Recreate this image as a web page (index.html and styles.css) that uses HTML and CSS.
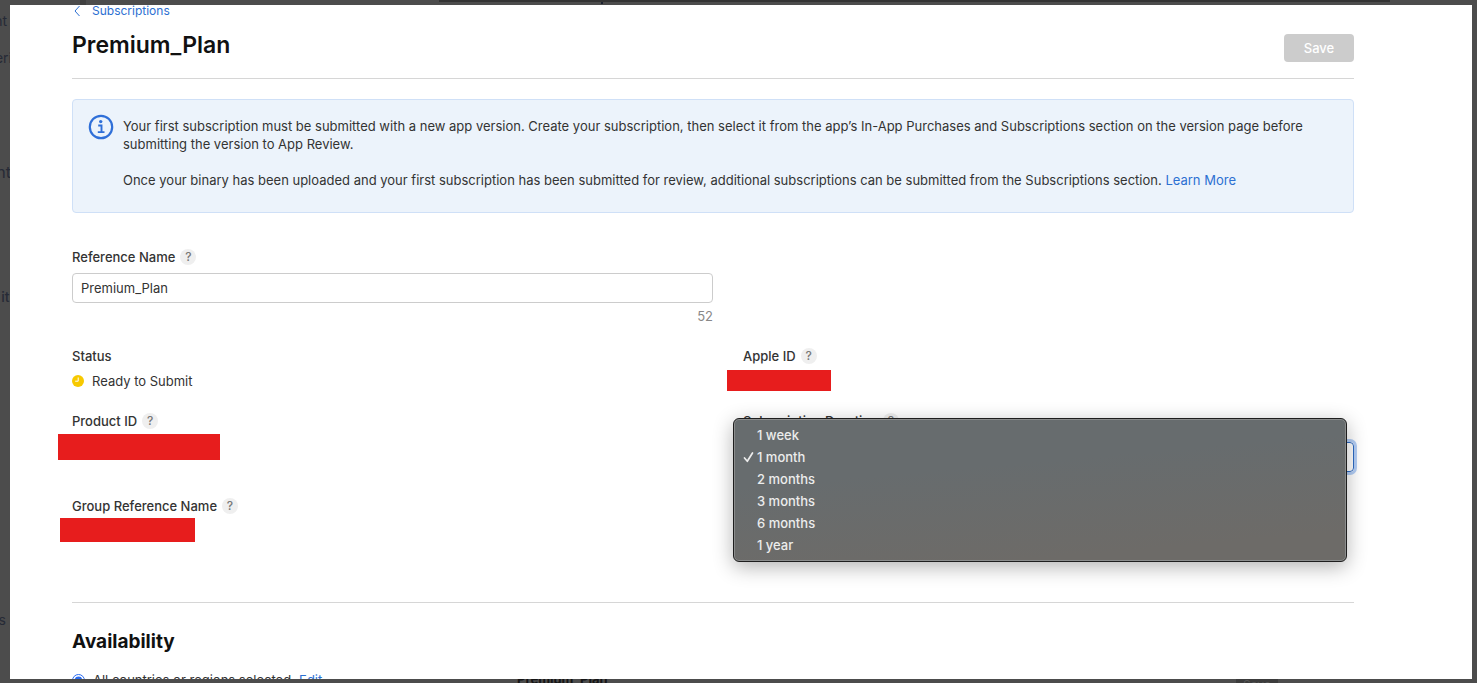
FILE: index.html
```html
<!DOCTYPE html>
<html lang="en">
<head>
<meta charset="utf-8">
<title>Premium_Plan</title>
<link rel="stylesheet" href="styles.css">
</head>
<body>
<div class="backdrop" aria-hidden="true">
  <div class="back-bar"></div>
  <div class="back-rule"></div>
  <span class="back-mark"></span>
  <span class="back-text back-text-1">nt</span>
  <span class="back-text back-text-2">eri</span>
  <span class="back-text back-text-3">nt</span>
  <span class="back-text back-text-4">iti</span>
  <span class="back-text back-text-5">s</span>
  <span class="back-title">Premium_Plan</span>
  <span class="back-save">Save</span>
</div>
<main class="modal">
  <header class="head">
    <a class="back-link" href="#">
      <svg width="6" height="12" viewBox="0 0 6 12" aria-hidden="true"><path d="M5.500 1 1 6l4.500 5" fill="none" stroke="currentColor"/></svg>
      Subscriptions
    </a>
    <div class="title-row">
      <h1 class="title">Premium_Plan</h1>
      <button class="save" type="button" disabled>Save</button>
    </div>
  </header>

  <section class="notice">
    <svg class="notice-icon" width="26" height="26" viewBox="0 0 26 26" aria-hidden="true">
      <circle cx="13" cy="13" r="11.200" fill="none" stroke="#2f6fd8" stroke-width="2.200"/>
      <circle cx="12.700" cy="7.600" r="1.700" fill="#2f6fd8"/>
      <path d="M10.200 11.500h3.300v6.500M9.800 18.100h6.700" fill="none" stroke="#2f6fd8" stroke-width="1.900"/>
    </svg>
    <div class="notice-text">
      <p>Your first subscription must be submitted with a new app version. Create your subscription, then select it from the app’s In-App Purchases and Subscriptions section on the version page before submitting the version to App Review.</p>
      <p>Once your binary has been uploaded and your first subscription has been submitted for review, additional subscriptions can be submitted from the Subscriptions section. <a href="#">Learn More</a></p>
    </div>
  </section>

  <form class="fields">
    <div class="field field-name">
      <div class="label-row"><label for="ref-name">Reference Name</label><button class="help" type="button">?</button></div>
      <input id="ref-name" class="text-input" type="text" value="Premium_Plan">
      <div class="count">52</div>
    </div>
    <div class="field field-status">
      <div class="label-row">Status</div>
      <div class="status">
        <svg width="12" height="12" viewBox="0 0 12 12" aria-hidden="true"><circle cx="6" cy="6" r="6" fill="#f7c900"/><path d="M6.200 2.500v3.700H3.200" fill="none" stroke="#fff"/></svg>
        Ready to Submit
      </div>
    </div>
    <div class="field field-right">
      <div class="label-row">Apple ID<button class="help" type="button">?</button></div>
      <div class="redact redact-apple"></div>
    </div>
    <div class="field field-product">
      <div class="label-row">Product ID<button class="help" type="button">?</button></div>
      <div class="redact redact-product"></div>
    </div>
    <div class="field field-right">
      <div class="label-row"><label for="duration">Subscription Duration</label><button class="help" type="button">?</button></div>
      <select id="duration" class="select"><option>1 month</option></select>
      <ul class="menu" role="listbox">
        <li role="option">1 week</li>
        <li role="option" aria-selected="true"><svg class="check" width="11" height="12" viewBox="0 0 11 12" aria-hidden="true"><path d="M1.500 7l2.800 3.300L9.500 2" fill="none" stroke="currentColor" stroke-width="1.700" stroke-linecap="round" stroke-linejoin="round"/></svg>1 month</li>
        <li role="option">2 months</li>
        <li role="option">3 months</li>
        <li role="option">6 months</li>
        <li role="option">1 year</li>
      </ul>
    </div>
    <div class="field field-group">
      <div class="label-row">Group Reference Name<button class="help" type="button">?</button></div>
      <div class="redact redact-group"></div>
    </div>
  </form>

  <section class="availability">
    <h2 class="subtitle">Availability</h2>
    <div class="radio-row">
      <input id="all" class="radio" type="radio" checked>
      <label for="all">All countries or regions selected</label>
      <a href="#">Edit</a>
    </div>
  </section>
</main>
</body>
</html>
```
FILE: styles.css
```css
* { box-sizing: border-box; }
body {
  margin: 0;
  height: 100vh;
  overflow: hidden;
  background: #4c4c4c;
  color: #333;
  font: 13px/18px Inter, "Liberation Sans", sans-serif;
}
h1, h2, p, ul { margin: 0; padding: 0; }
a { color: #2d70d2; text-decoration: none; }

.backdrop { position: absolute; inset: 0; overflow: hidden; color: #262a36; }
.back-bar { position: absolute; left: 439px; right: 87px; top: 0; height: 2px; background: #333; }
.back-rule { position: absolute; left: 80px; top: 0; width: 6px; height: 5px; background: #404040; }
.back-mark { position: absolute; left: 601px; top: 2px; width: 2px; height: 2px; background: #1c2230; }
.back-text { position: absolute; right: calc(100% - 11px); font-size: 14px; }
.back-text-1 { top: 12px; right: calc(100% - 7px); }
.back-text-2 { top: 49px; right: calc(100% - 12px); }
.back-text-3 { top: 163px; font-size: 16px; }
.back-text-4 { top: 288px; right: calc(100% - 13px); font-weight: 500; }
.back-text-5 { top: 611px; right: calc(100% - 6px); }
.back-title { position: absolute; left: 517px; bottom: -5px; font-weight: 700; color: #151515; }
.back-save { position: absolute; left: 1236px; bottom: -11px; width: 42px; background: #3c3c3c; color: #555; text-align: center; font-size: 12px; }

.modal {
  position: absolute;
  inset: 5px 5px 4px 10px;
  overflow: hidden;
  padding: 0 118px 0 62px;
  background: #fff;
}

.head { height: 74px; border-bottom: 1px solid #d6d6d6; }
.back-link { display: flex; align-items: center; gap: 12px; padding-left: 2px; font-size: 12px; line-height: 12px; }
.title-row { display: flex; justify-content: space-between; align-items: center; padding-top: 14px; }
.title { padding-bottom: 6px; font-size: 23px; line-height: 28px; font-weight: 600; color: #111; }
.save { width: 70px; height: 28px; padding: 0; border: 0; border-radius: 4px; background: #ccc; color: #fff; font: 500 13px/18px Inter, sans-serif; }

.notice {
  display: flex;
  gap: 9px;
  margin-top: 20px;
  padding: 14px 28px 23px 15px;
  border: 1px solid #cfe0f7;
  border-radius: 4px;
  background: #ecf3fb;
}
.notice-icon { flex: none; }
.notice-text { display: grid; gap: 18px; padding-top: 3px; }

.fields { display: grid; grid-template-columns: 1fr 1fr; margin-top: 36px; }
.field { position: relative; }
.label-row { display: flex; align-items: center; gap: 5px; height: 16px; font-weight: 500; }
.help { width: 16px; height: 16px; padding: 0; border: 0; border-radius: 50%; background: #efefef; color: #777; font: 500 12px/16px Inter, sans-serif; }
.field-name { grid-column: 1; height: 99px; }
.text-input { display: block; width: 100%; height: 30px; margin-top: 8px; padding: 0 8px; border: 1px solid #ccc; border-radius: 4px; color: #333; font: 13px/18px Inter, sans-serif; }
.count { margin-top: 4px; text-align: right; color: #888; }
.field-status { grid-column: 1; height: 65px; }
.status { display: flex; align-items: center; gap: 8px; margin-top: 8px; }
.field-right { padding-left: 30px; }
.field-product { height: 85px; }
.field-group { height: 104px; }
.select { display: block; width: 100%; height: 30px; margin-top: 13px; padding: 0 8px; border: 1px solid #2d6bc4; border-radius: 4px; outline: 3px solid #b3cef6; background: #fff; font: 13px/18px Inter, sans-serif; appearance: none; }

.redact { position: absolute; background: #e71d1d; }
.redact-apple { left: 14px; top: 22px; width: 104px; height: 21px; }
.redact-product { left: -14px; top: 21px; width: 162px; height: 26px; }
.redact-group { left: -12px; top: 20px; width: 135px; height: 24px; }

.menu {
  position: absolute;
  left: 20px;
  right: 7px;
  top: 5px;
  z-index: 2;
  padding: 5px;
  border: 1px solid #1e1e1e;
  border-radius: 6px;
  background: linear-gradient(175deg, #676c6e 35%, #6d6b68 85%);
  box-shadow: inset 0 0 0 1px #8b8d8d, 0 5px 20px rgba(0, 0, 0, 0.3);
  color: #ececec;
  font-weight: 500;
  list-style: none;
}
.menu li { position: relative; padding-left: 18px; line-height: 22px; }
.check { position: absolute; left: 4px; top: 5px; }

.availability { border-top: 1px solid #d6d6d6; padding-top: 26px; }
.subtitle { font-size: 19px; line-height: 26px; font-weight: 700; color: #111; }
.radio-row { display: flex; align-items: center; gap: 8px; margin-top: 16px; }
.radio { width: 13px; height: 13px; margin: 0; accent-color: #2b6cf0; }
```
